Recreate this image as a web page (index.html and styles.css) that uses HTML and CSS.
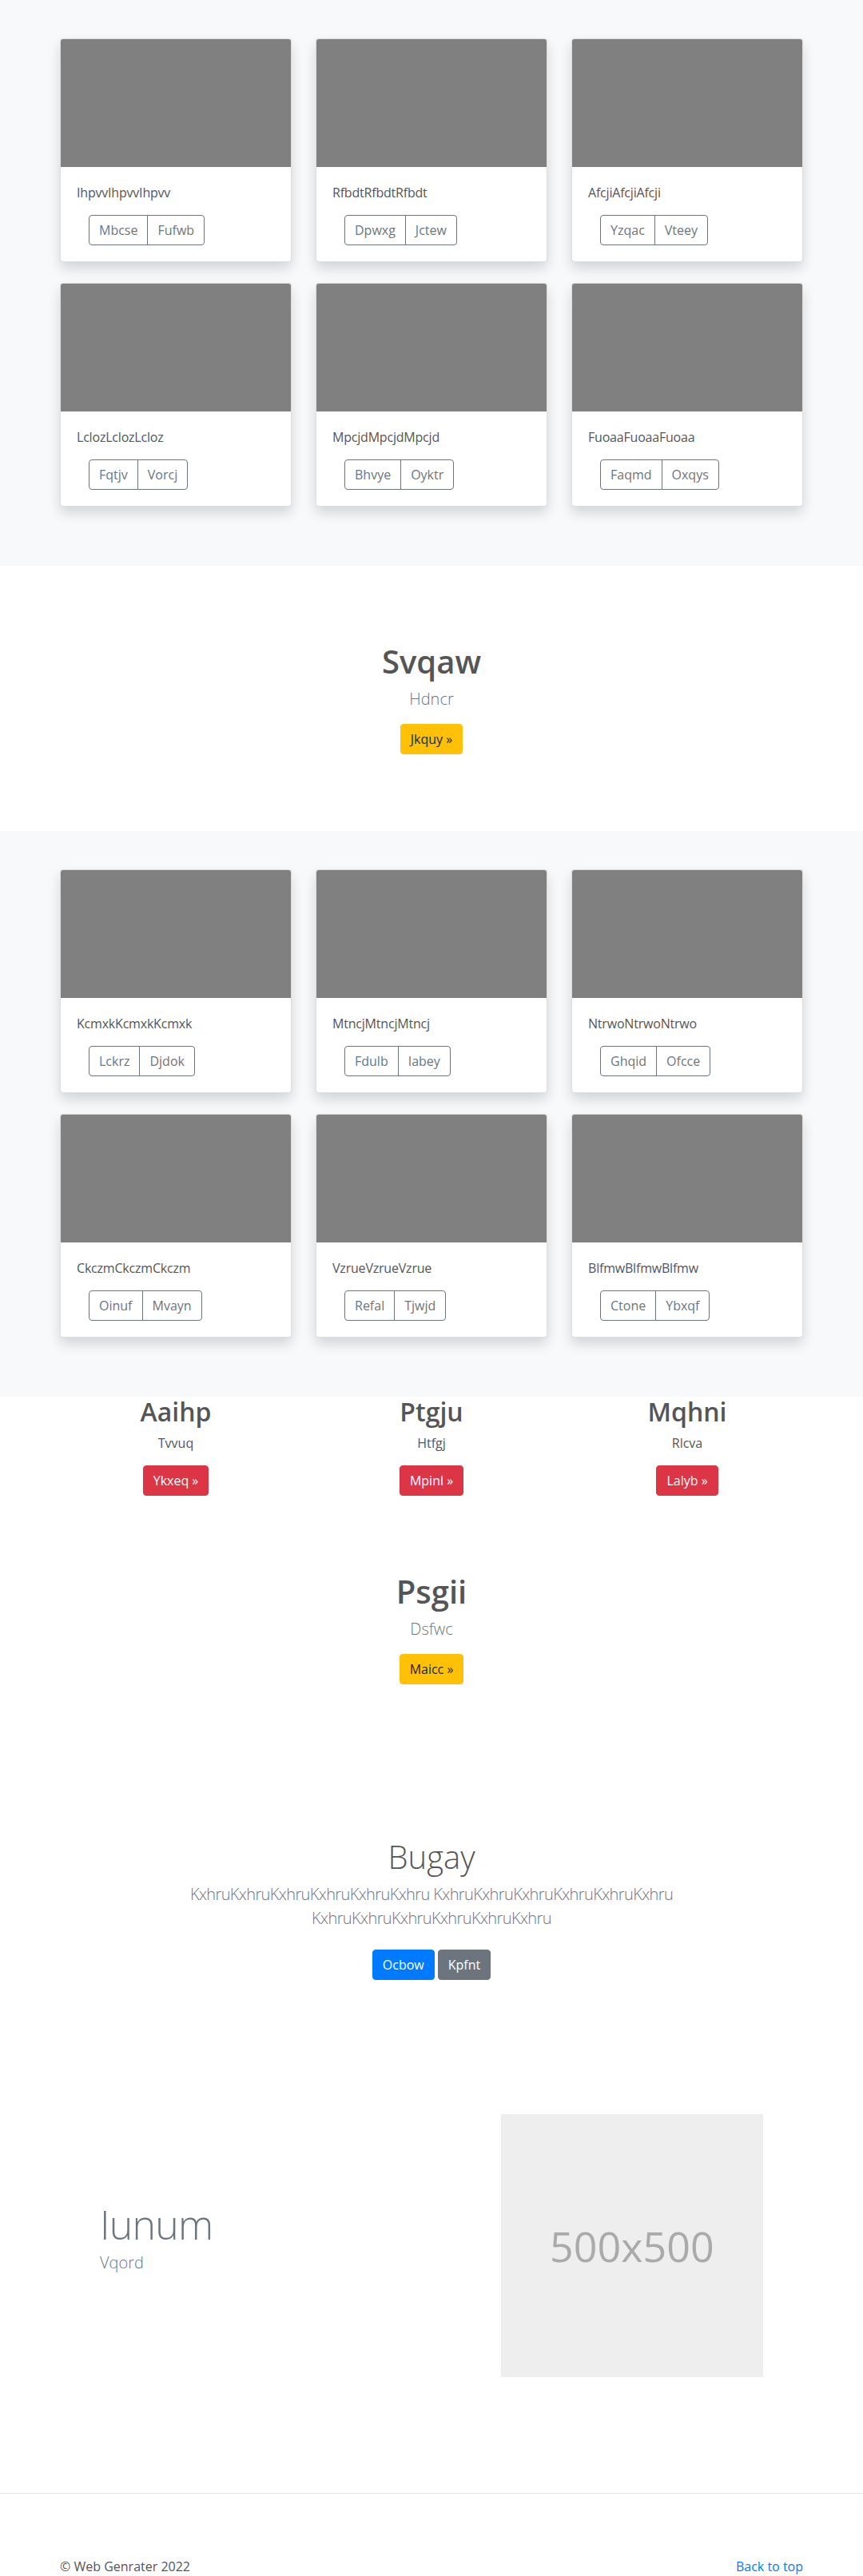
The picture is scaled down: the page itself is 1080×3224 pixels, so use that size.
FILE: index.html
```html
<!DOCTYPE html>
<html lang="en">
<head>
<meta charset="utf-8">
<title>Album</title>
<link rel="stylesheet" href="styles.css">
</head>
<body>
<main>
  <section class="album">
    <div class="container">
      <div class="grid">
        <div class="card"><div class="card-img"></div><div class="card-body"><p class="card-text">IhpvvIhpvvIhpvv</p><div class="btn-group"><button class="btn-o first">Mbcse</button><button class="btn-o last">Fufwb</button></div></div></div>
        <div class="card"><div class="card-img"></div><div class="card-body"><p class="card-text">RfbdtRfbdtRfbdt</p><div class="btn-group"><button class="btn-o first">Dpwxg</button><button class="btn-o last">Jctew</button></div></div></div>
        <div class="card"><div class="card-img"></div><div class="card-body"><p class="card-text">AfcjiAfcjiAfcji</p><div class="btn-group"><button class="btn-o first">Yzqac</button><button class="btn-o last">Vteey</button></div></div></div>
        <div class="card"><div class="card-img"></div><div class="card-body"><p class="card-text">LclozLclozLcloz</p><div class="btn-group"><button class="btn-o first">Fqtjv</button><button class="btn-o last">Vorcj</button></div></div></div>
        <div class="card"><div class="card-img"></div><div class="card-body"><p class="card-text">MpcjdMpcjdMpcjd</p><div class="btn-group"><button class="btn-o first">Bhvye</button><button class="btn-o last">Oyktr</button></div></div></div>
        <div class="card"><div class="card-img"></div><div class="card-body"><p class="card-text">FuoaaFuoaaFuoaa</p><div class="btn-group"><button class="btn-o first">Faqmd</button><button class="btn-o last">Oxqys</button></div></div></div>
      </div>
    </div>
  </section>

  <section class="hero">
    <h1 class="title">Svqaw</h1>
    <p class="lead muted">Hdncr</p>
    <a class="btn btn-warning" href="#">Jkquy &raquo;</a>
  </section>

  <section class="album">
    <div class="container">
      <div class="grid">
        <div class="card"><div class="card-img"></div><div class="card-body"><p class="card-text">KcmxkKcmxkKcmxk</p><div class="btn-group"><button class="btn-o first">Lckrz</button><button class="btn-o last">Djdok</button></div></div></div>
        <div class="card"><div class="card-img"></div><div class="card-body"><p class="card-text">MtncjMtncjMtncj</p><div class="btn-group"><button class="btn-o first">Fdulb</button><button class="btn-o last">Iabey</button></div></div></div>
        <div class="card"><div class="card-img"></div><div class="card-body"><p class="card-text">NtrwoNtrwoNtrwo</p><div class="btn-group"><button class="btn-o first">Ghqid</button><button class="btn-o last">Ofcce</button></div></div></div>
        <div class="card"><div class="card-img"></div><div class="card-body"><p class="card-text">CkczmCkczmCkczm</p><div class="btn-group"><button class="btn-o first">Oinuf</button><button class="btn-o last">Mvayn</button></div></div></div>
        <div class="card"><div class="card-img"></div><div class="card-body"><p class="card-text">VzrueVzrueVzrue</p><div class="btn-group"><button class="btn-o first">Refal</button><button class="btn-o last">Tjwjd</button></div></div></div>
        <div class="card"><div class="card-img"></div><div class="card-body"><p class="card-text">BlfmwBlfmwBlfmw</p><div class="btn-group"><button class="btn-o first">Ctone</button><button class="btn-o last">Ybxqf</button></div></div></div>
      </div>
    </div>
  </section>

  <section class="cols container">
    <div class="col">
      <h2 class="col-title">Aaihp</h2>
      <p class="col-text">Tvvuq</p>
      <a class="btn btn-danger" href="#">Ykxeq &raquo;</a>
    </div>
    <div class="col">
      <h2 class="col-title">Ptgju</h2>
      <p class="col-text">Htfgj</p>
      <a class="btn btn-danger" href="#">Mpinl &raquo;</a>
    </div>
    <div class="col">
      <h2 class="col-title">Mqhni</h2>
      <p class="col-text">Rlcva</p>
      <a class="btn btn-danger" href="#">Lalyb &raquo;</a>
    </div>
  </section>

  <section class="hero">
    <h1 class="title">Psgii</h1>
    <p class="lead muted">Dsfwc</p>
    <a class="btn btn-warning" href="#">Maicc &raquo;</a>
  </section>

  <section class="jumbo">
    <h1 class="jumbo-title">Bugay</h1>
    <p class="lead muted jumbo-lead">KxhruKxhruKxhruKxhruKxhruKxhru KxhruKxhruKxhruKxhruKxhruKxhru KxhruKxhruKxhruKxhruKxhruKxhru</p>
    <p class="actions">
      <a class="btn btn-primary" href="#">Ocbow</a>
      <a class="btn btn-secondary" href="#">Kpfnt</a>
    </p>
  </section>

  <section class="featurette">
    <div class="feat-text">
      <h2 class="feat-heading">Iunum</h2>
      <p class="lead muted feat-lead">Vqord</p>
    </div>
    <div class="feat-media">
      <div class="placeholder">500x500</div>
    </div>
  </section>

  <hr class="divider">

  <footer class="footer container">
    <p class="copy">&copy; Web Genrater 2022</p>
    <a class="top-link" href="#">Back to top</a>
  </footer>
</main>
</body>
</html>
```

FILE: styles.css
```css
* { box-sizing: border-box; }

body {
  margin: 0;
  font-family: "Open Sans", "Noto Sans", "Liberation Sans", sans-serif;
  font-size: 16px;
  line-height: 1.5;
  color: #555;
  background: #fff;
}

a { text-decoration: none; }

.container {
  width: 930px;
  margin: 0 auto;
}

/* album */
.album {
  background: #f8f9fa;
  padding: 48px 0;
}

.grid {
  display: grid;
  grid-template-columns: repeat(3, 290px);
  column-gap: 30px;
}

.card {
  height: 280px;
  margin-bottom: 26px;
  background: #fff;
  border: 1px solid rgba(0, 0, 0, 0.125);
  border-radius: 4px;
  box-shadow: 0 8px 16px rgba(0, 0, 0, 0.15);
  overflow: hidden;
}

.card-img {
  height: 160px;
  background: #808080;
}

.card-body {
  padding: 20px;
}

.card-text {
  margin: 0 0 16px;
  line-height: 24px;
  letter-spacing: -0.2px;
}

.btn-group {
  display: inline-flex;
  margin-left: 15px;
}

.btn-o {
  font-family: inherit;
  font-size: 16px;
  line-height: 24px;
  padding: 6px 12px;
  color: #6c757d;
  background: transparent;
  border: 1px solid #6c757d;
  cursor: pointer;
}

.btn-o.first { border-radius: 4px 0 0 4px; }
.btn-o.last { border-radius: 0 4px 4px 0; margin-left: -1px; }

/* buttons */
.btn {
  display: inline-block;
  padding: 6px 12px;
  font-size: 16px;
  line-height: 24px;
  border: 1px solid transparent;
  border-radius: 4px;
}

.btn-warning { background: #ffc107; border-color: #ffc107; color: #212529; }
.btn-danger { background: #dc3545; border-color: #dc3545; color: #fff; }
.btn-primary { background: #007bff; border-color: #007bff; color: #fff; }
.btn-secondary { background: #6c757d; border-color: #6c757d; color: #fff; }

/* hero */
.hero {
  text-align: center;
  padding: 96px 0;
}

.title {
  margin: 0 0 8px;
  font-size: 40px;
  line-height: 48px;
  font-weight: 600;
  color: #555;
}

.lead {
  font-size: 20px;
  font-weight: 300;
  line-height: 30px;
  margin: 0 0 16px;
}

.muted { color: #6c757d; }

/* columns */
.cols {
  display: grid;
  grid-template-columns: repeat(3, 1fr);
  column-gap: 30px;
  text-align: center;
}

.col-title {
  margin: 0 0 8px;
  font-size: 32px;
  line-height: 38.4px;
  font-weight: 600;
  color: #555;
}

.col-text {
  margin: 0 0 16px;
}

/* jumbotron */
.jumbo {
  text-align: center;
  padding: 96px 0 88px;
}

.jumbo-title {
  margin: 0 0 8px;
  font-size: 40px;
  line-height: 48px;
  font-weight: 300;
  color: #555;
}

.jumbo-lead {
  max-width: 700px;
  margin: 0 auto 24px;
  letter-spacing: -0.6px;
}

.actions {
  margin: 0;
  display: flex;
  justify-content: center;
  gap: 4px;
}

/* featurette */
.featurette {
  width: 860px;
  margin: 80px auto 0;
  display: grid;
  grid-template-columns: 7fr 5fr;
  align-items: center;
}

.feat-text,
.feat-media {
  padding: 0 15px;
}

.feat-heading {
  margin: 0 0 8px;
  font-size: 50px;
  line-height: 1;
  font-weight: 300;
  letter-spacing: -0.8px;
  color: #6c757d;
}

.feat-lead {
  margin: 0 0 16px;
}

.placeholder {
  width: 100%;
  aspect-ratio: 1 / 1;
  background: #eee;
  color: #aaa;
  display: flex;
  align-items: center;
  justify-content: center;
  font-size: 52px;
}

.divider {
  margin: 145px 0 0;
  border: 0;
  border-top: 1px solid rgba(0, 0, 0, 0.1);
}

/* footer */
.footer {
  padding: 79px 0 48px;
  display: flex;
  justify-content: space-between;
  align-items: flex-start;
}

.copy {
  margin: 0;
  color: #555;
}

.top-link {
  color: #007bff;
}
```
